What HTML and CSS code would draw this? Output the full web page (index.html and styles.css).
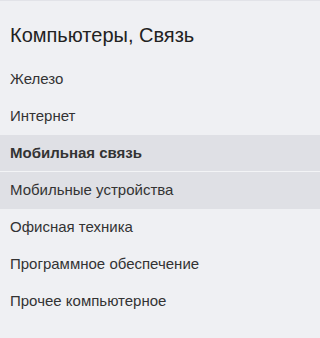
FILE: index.html
```html
<!DOCTYPE html>
<html lang="ru">
<head>
<meta charset="utf-8">
<link rel="stylesheet" href="styles.css">
</head>
<body>
<nav class="menu">
  <h2 class="menu-title">Компьютеры, Связь</h2>
  <ul class="menu-list">
    <li class="menu-item">Железо</li>
    <li class="menu-item">Интернет</li>
    <li class="menu-item is-active">Мобильная связь</li>
    <li class="menu-item is-hover">Мобильные устройства</li>
    <li class="menu-item">Офисная техника</li>
    <li class="menu-item">Программное обеспечение</li>
    <li class="menu-item">Прочее компьютерное</li>
  </ul>
</nav>
</body>
</html>
```
FILE: styles.css
```css
html, body {
  margin: 0;
  padding: 0;
  background: #eff0f3;
}
body {
  font-family: "Liberation Sans", Arial, sans-serif;
  color: #333;
}
.menu {
  border-top: 1px solid #e2e3e8;
  padding: 0 0 20px;
}
.menu-title {
  margin: 0;
  padding: 22px 10px 14px;
  font-size: 20px;
  font-weight: normal;
  line-height: 24px;
  color: #222;
}
.menu-list {
  list-style: none;
  margin: 0;
  padding: 0;
}
.menu-item {
  font-size: 15px;
  line-height: 16px;
  padding: 10px;
  border-bottom: 1px solid transparent;
}
.menu-item.is-active {
  background: #dfe0e5;
  font-weight: bold;
  border-bottom-color: #f3f4f6;
}
.menu-item.is-hover {
  background: #dfe0e5;
}
```
